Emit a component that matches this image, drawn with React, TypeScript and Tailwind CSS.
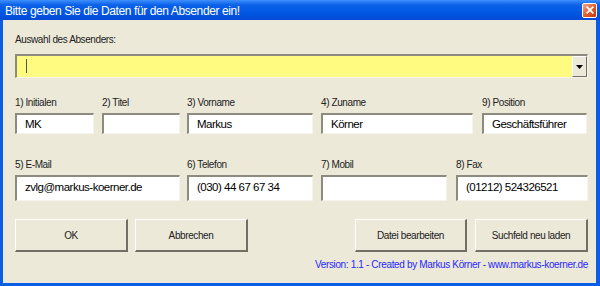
import { ReactNode } from "react";

const font = { fontFamily: '"Liberation Sans", Arial, sans-serif' };

function Field({ label, value, w, h }: { label: string; value?: string; w: string; h: string }) {
  return (
    <div className={`flex flex-col ${w}`}>
      <span className="text-[10px] tracking-[-0.4px] leading-[13px] text-[#222] h-[13px] mb-[4px]">{label}</span>
      <div
        className={`${h} bg-white border-t-2 border-l-2 border-t-[#8d8a7f] border-l-[#8d8a7f] border-b border-r border-b-[#f4f3ee] border-r-[#f4f3ee] pl-[8px] text-[11.5px] tracking-[-0.5px] leading-[18px] text-black`}>
        {value}
      </div>
    </div>
  );
}

function Btn({ children, w }: { children: ReactNode; w: string }) {
  return (
    <div
      className={`${w} h-[33px] flex items-center justify-center text-[10px] tracking-[-0.4px] text-[#222] bg-[#ece9d8] border-t border-l border-t-white border-l-white border-b-2 border-r-2 border-b-[#716f64] border-r-[#716f64]`}>
      {children}
    </div>
  );
}

export default function App() {
  return (
    <div className="w-[600px] h-[286px] flex flex-col bg-[#0a5ee6] overflow-hidden" style={font}>
      {/* Titelleiste */}
      <div className="h-[20px] flex items-center justify-between pl-[5px] pr-[3px] bg-[linear-gradient(to_bottom,#3d8ffc_0%,#0b61e8_25%,#0054e3_70%,#0649d4_100%)]">
        <span className="text-white text-[12px] tracking-[-0.4px] leading-none mt-[1px]">
          Bitte geben Sie die Daten für den Absender ein!
        </span>
        <div className="w-[15px] h-[15px] rounded-[2px] border border-white bg-[linear-gradient(135deg,#f3a58a,#e2592b_55%,#c43a10)] flex items-center justify-center">
          <svg width="8" height="8" viewBox="0 0 8 8">
            <path d="M1.2 1.2 L6.8 6.8 M6.8 1.2 L1.2 6.8" stroke="white" strokeWidth="1.8" strokeLinecap="square" />
          </svg>
        </div>
      </div>

      {/* Inhalt */}
      <div className="flex-1 ml-[3px] mr-[4px] mb-[3px] bg-[#ece9d8] pl-[12px] pr-[8px] pt-[13px] flex flex-col">
        <span className="text-[10px] tracking-[-0.4px] leading-[13px] text-[#222]">Auswahl des Absenders:</span>
        <div className="mt-[8px] h-[24px] flex bg-[#fffa80] border-t-2 border-l-2 border-t-[#8d8a7f] border-l-[#8d8a7f] border-b border-r border-b-[#f4f3ee] border-r-[#f4f3ee]">
          <div className="flex-1 pl-[9px] pt-[3px]">
            <div className="w-px h-[14px] bg-[#555]" />
          </div>
          <div className="w-[15px] h-[21px] bg-[#ece9d8] border-t border-l border-t-white border-l-white border-b border-r border-b-[#716f64] border-r-[#716f64] flex items-center justify-center">
            <svg width="7" height="4" viewBox="0 0 7 4">
              <path d="M0 0 H7 L3.5 4 Z" fill="black" />
            </svg>
          </div>
        </div>

        <div className="mt-[18px] flex">
          <Field label="1) Initialen" value="MK" w="w-[79px]" h="h-[21px]" />
          <div className="w-[8px]" />
          <Field label="2) Titel" w="w-[78px]" h="h-[21px]" />
          <div className="w-[7px]" />
          <Field label="3) Vorname" value="Markus" w="w-[126px]" h="h-[21px]" />
          <div className="w-[8px]" />
          <Field label="4) Zuname" value="Körner" w="w-[152px]" h="h-[21px]" />
          <div className="w-[9px]" />
          <Field label="9) Position" value="Geschäftsführer" w="w-[105px]" h="h-[21px]" />
        </div>

        <div className="mt-[24px] flex">
          <Field label="5) E-Mail" value="zvlg@markus-koerner.de" w="w-[165px]" h="h-[26px] pt-[1px]" />
          <div className="w-[7px]" />
          <Field label="6) Telefon" value="(030) 44 67 67 34" w="w-[126px]" h="h-[26px] pt-[1px]" />
          <div className="w-[8px]" />
          <Field label="7) Mobil" w="w-[126px]" h="h-[26px] pt-[1px]" />
          <div className="w-[9px]" />
          <Field label="8) Fax" value="(01212) 524326521" w="w-[132px]" h="h-[26px] pt-[1px]" />
        </div>

        <div className="mt-[18px] flex">
          <Btn w="w-[113px]">OK</Btn>
          <div className="w-[7px]" />
          <Btn w="w-[113px]">Abbrechen</Btn>
          <div className="flex-1" />
          <Btn w="w-[112px]">Datei bearbeiten</Btn>
          <div className="w-[8px]" />
          <Btn w="w-[113px]">Suchfeld neu laden</Btn>
        </div>

        <div className="mt-[6px] text-right text-[10px] tracking-[-0.35px] leading-[13px] text-[#2727ff]">
          Version: 1.1 - Created by Markus Körner - www.markus-koerner.de
        </div>
      </div>
    </div>
  );
}
